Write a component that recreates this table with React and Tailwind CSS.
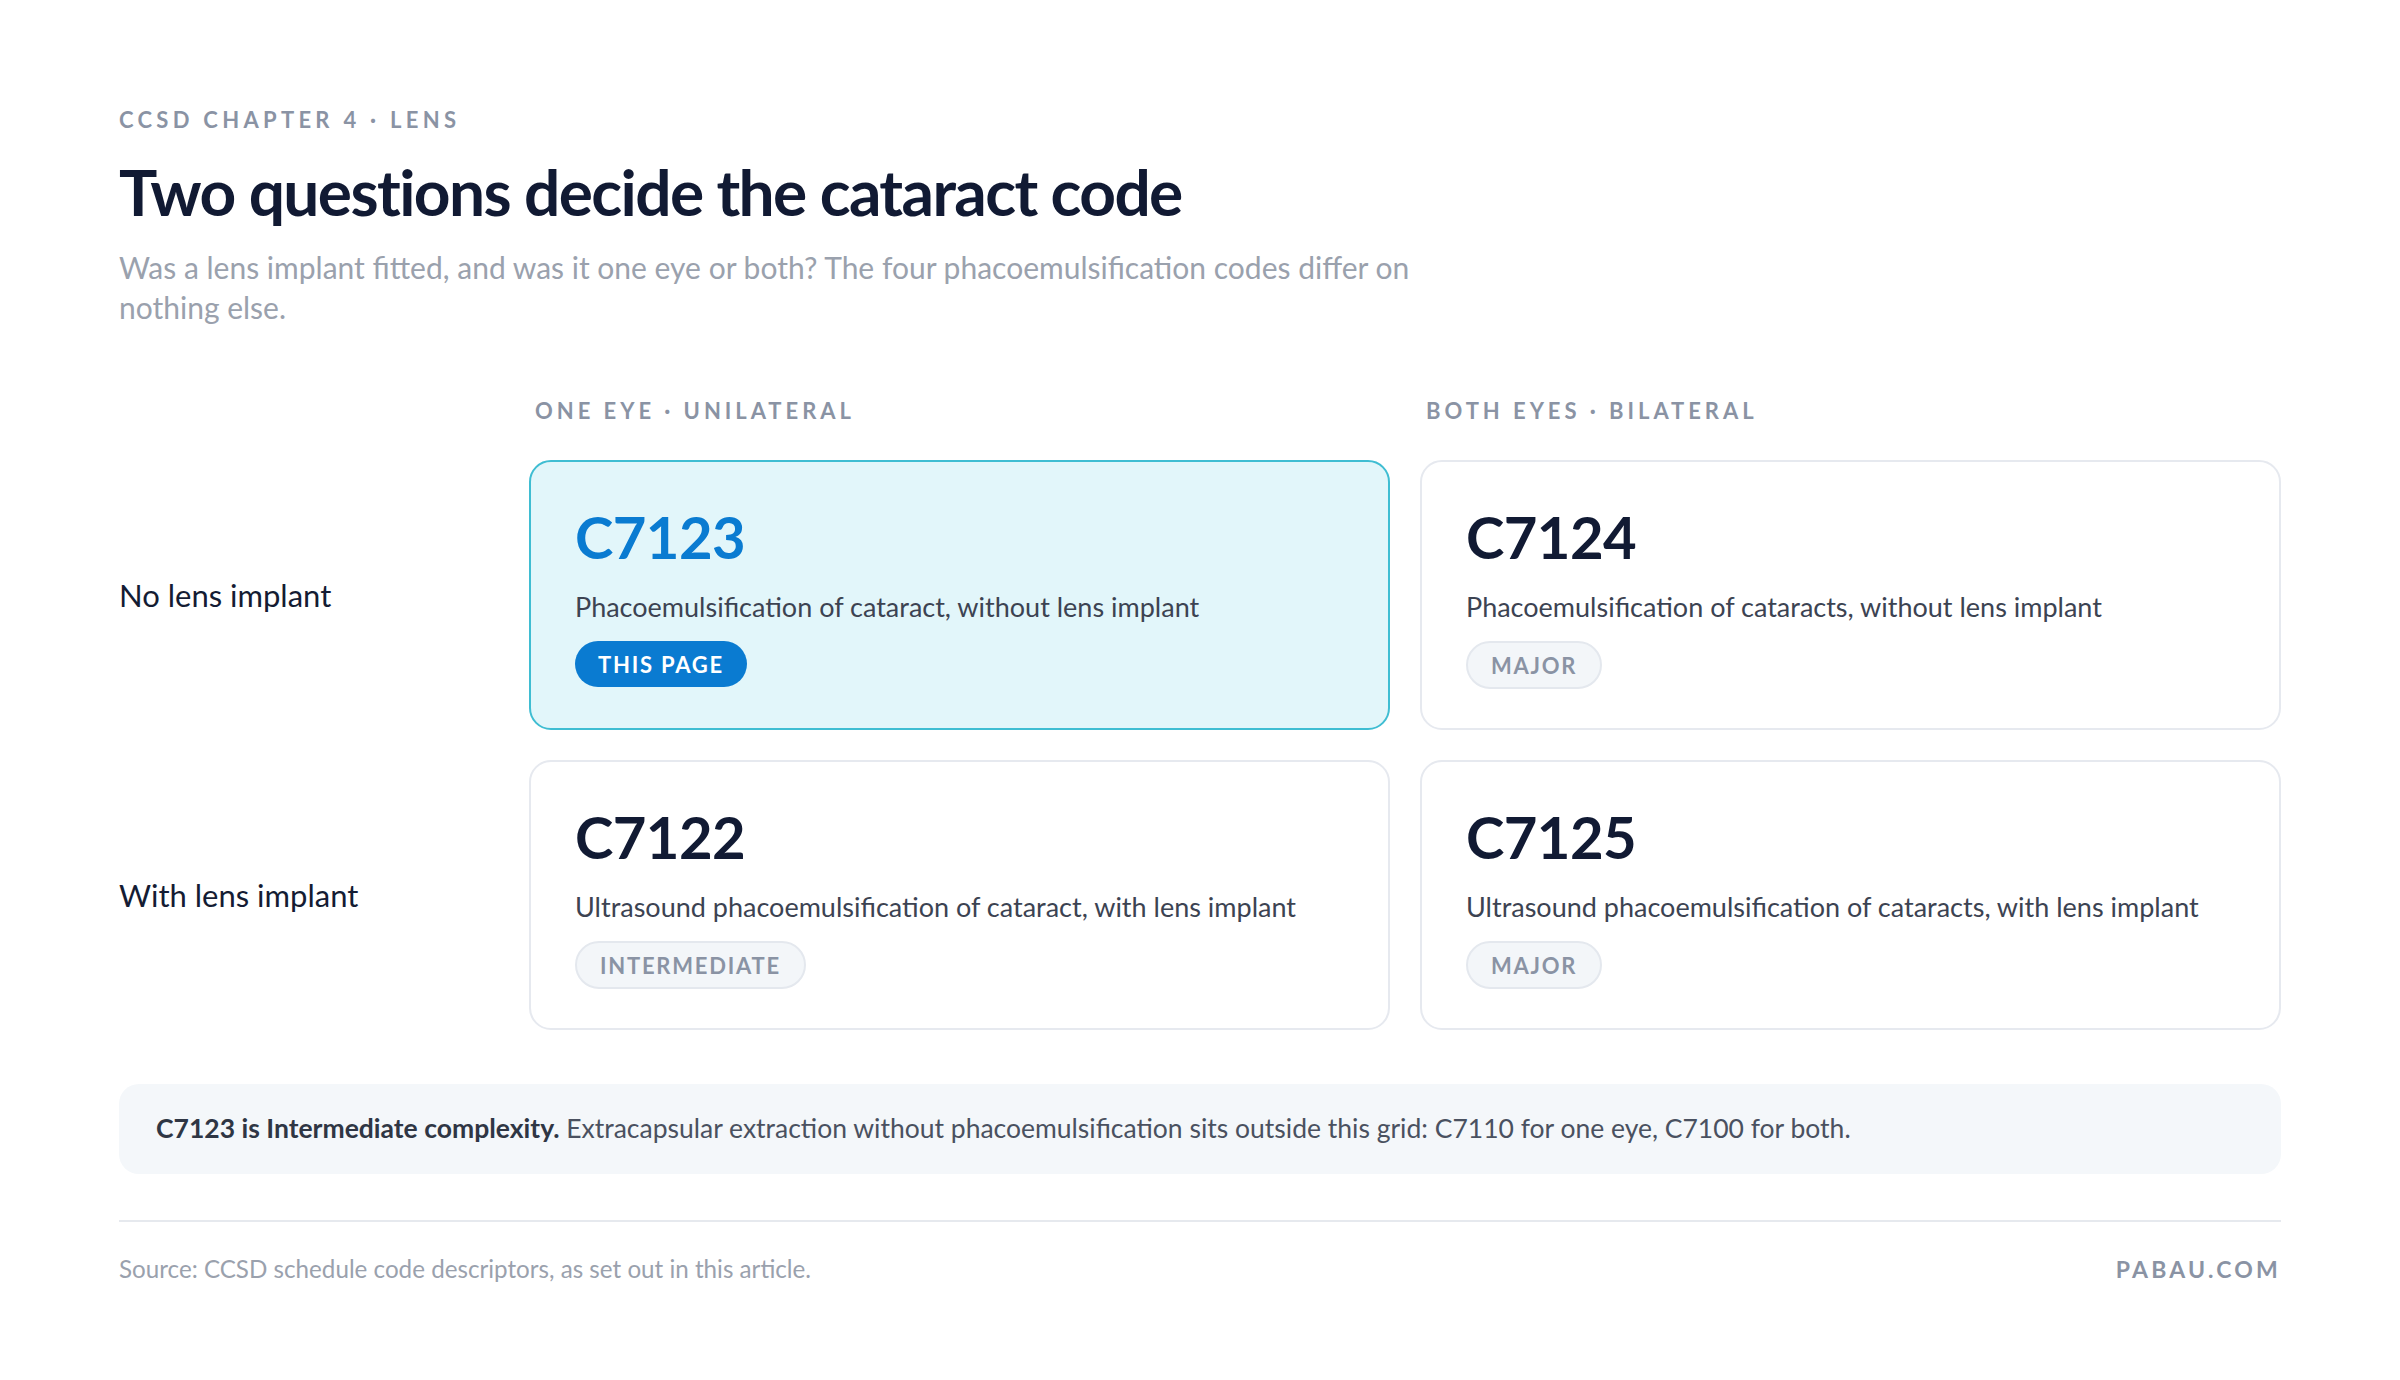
import React from "react";

const FONT = { fontFamily: "Lato, 'Liberation Sans', sans-serif" };

function Badge({ kind, children }) {
  if (kind === "primary") {
    return (
      <span className="inline-flex h-[46px] items-center rounded-full bg-[#0a7bd1] px-[23px] text-[22px] font-bold uppercase tracking-[0.08em] text-white">
        {children}
      </span>
    );
  }
  return (
    <span className="inline-flex h-[48px] items-center rounded-full border-2 border-[#e4e8ee] bg-[#f3f6f9] px-[23px] text-[22px] font-bold uppercase tracking-[0.08em] text-[#8a93a4]">
      {children}
    </span>
  );
}

function Card({ code, desc, badge, active }) {
  return (
    <div
      className={
        active
          ? "flex h-[270px] flex-col rounded-[22px] border-2 border-[#3fbdd2] bg-[#e2f6fa] px-[44px] pt-[46px]"
          : "flex h-[270px] flex-col rounded-[22px] border-2 border-[#e6e9ef] bg-white px-[44px] pt-[46px]"
      }
    >
      <div
        className={
          active
            ? "text-[58px] font-bold leading-none tracking-[-0.01em] text-[#0a7bd1]"
            : "text-[58px] font-bold leading-none tracking-[-0.01em] text-[#111a33]"
        }
      >
        {code}
      </div>
      <div className="mt-[23px] text-[27px] leading-[36px] text-[#3c4352]">{desc}</div>
      <div className="mt-[16px] flex">
        <Badge kind={active ? "primary" : "muted"}>{badge}</Badge>
      </div>
    </div>
  );
}

export default function App() {
  return (
    <div className="h-[1380px] w-[2400px] bg-white px-[119px] pt-[108px]" style={FONT}>
      <div className="text-[22px] font-bold uppercase leading-[24px] tracking-[0.195em] text-[#8a93a4]">
        CCSD Chapter 4 · Lens
      </div>
      <h1 className="mt-[23px] text-[64px] font-bold leading-[74px] tracking-[-0.025em] text-[#111a33]">
        Two questions decide the cataract code
      </h1>
      <p className="mt-[18px] max-w-[1360px] text-[30px] leading-[40px] text-[#9aa1ad]">
        Was a lens implant fitted, and was it one eye or both? The four phacoemulsification codes differ on nothing else.
      </p>

      <div className="mt-[72px] grid grid-cols-[380px_1fr_1fr] gap-x-[30px]">
        <div />
        <div className="pl-[6px] text-[22px] font-bold uppercase leading-[24px] tracking-[0.18em] text-[#8a93a4]">
          One eye · Unilateral
        </div>
        <div className="pl-[6px] text-[22px] font-bold uppercase leading-[24px] tracking-[0.18em] text-[#8a93a4]">
          Both eyes · Bilateral
        </div>
      </div>

      <div className="mt-[37px] grid grid-cols-[380px_1fr_1fr] gap-[30px]">
        <div className="flex items-center text-[31px] text-[#141c33]">No lens implant</div>
        <Card
          active
          code="C7123"
          desc="Phacoemulsification of cataract, without lens implant"
          badge="This page"
        />
        <Card
          code="C7124"
          desc="Phacoemulsification of cataracts, without lens implant"
          badge="Major"
        />
        <div className="flex items-center text-[31px] text-[#141c33]">With lens implant</div>
        <Card
          code="C7122"
          desc="Ultrasound phacoemulsification of cataract, with lens implant"
          badge="Intermediate"
        />
        <Card
          code="C7125"
          desc="Ultrasound phacoemulsification of cataracts, with lens implant"
          badge="Major"
        />
      </div>

      <div className="mt-[54px] flex h-[90px] items-center rounded-[20px] bg-[#f4f7fa] px-[37px] text-[26.5px] text-[#4a5160]">
        <p>
          <span className="font-bold text-[#2f3644]">C7123 is Intermediate complexity.</span>{" "}
          Extracapsular extraction without phacoemulsification sits outside this grid: C7110 for one eye, C7100 for both.
        </p>
      </div>

      <div className="mt-[46px] h-[2px] bg-[#e6e9ee]" />

      <div className="mt-[35px] flex items-center justify-between leading-[24px]">
        <span className="text-[24.2px] text-[#9aa1ad]">
          Source: CCSD schedule code descriptors, as set out in this article.
        </span>
        <span className="text-[23px] font-bold tracking-[0.14em] text-[#8a93a4]">PABAU.COM</span>
      </div>
    </div>
  );
}
